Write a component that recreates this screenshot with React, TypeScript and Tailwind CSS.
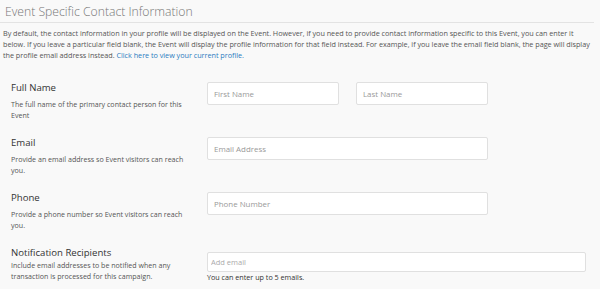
const rows = [
  {
    label: 'Full Name',
    desc: 'The full name of the primary contact person for this Event',
    fields: ['First Name', 'Last Name'],
  },
  {
    label: 'Email',
    desc: 'Provide an email address so Event visitors can reach you.',
    fields: ['Email Address'],
  },
  {
    label: 'Phone',
    desc: 'Provide a phone number so Event visitors can reach you.',
    fields: ['Phone Number'],
  },
]

export default function App() {
  return (
    <div className="w-[600px] h-[289px] overflow-hidden bg-[#f9f9f9] font-['Open_Sans',sans-serif]">
      <div className="pr-[6px] pt-[4px]">
        <h2 className="pl-[5px] pb-[2px] text-[12.2px] leading-[16px] font-light text-[#777] border-b border-[#e3e3e3]">
          Event Specific Contact Information
        </h2>
        <p className="pl-[3px] mt-[5px] text-[7.25px] leading-[11px] tracking-[-0.03px] text-[#555]">
          By default, the contact information in your profile will be displayed on the Event. However, if you need to
          provide contact information specific to this Event, you can enter it below. If you leave a particular field
          blank, the Event will display the profile information for that field instead. For example, if you leave the
          email field blank, the page will display the profile email address instead.{' '}
          <a href="#" className="text-[#2b7bbf]">Click here to view your current profile.</a>
        </p>
      </div>

      <div className="mt-[20px] pl-[11px] flex flex-col">
        {rows.map((r) => (
          <div key={r.label} className="flex h-[55px]">
            <div className="w-[196px] shrink-0">
              <div className="text-[9.6px] leading-[14px] text-[#333]">{r.label}</div>
              <div className="mt-[4px] w-[182px] text-[7.1px] leading-[11px] text-[#555]">{r.desc}</div>
            </div>
            <div className="mt-[1px] flex gap-[17px]">
              {r.fields.map((f) => (
                <input
                  key={f}
                  placeholder={f}
                  className={`${r.fields.length > 1 ? 'w-[132px]' : 'w-[281px]'} h-[23px] px-[6px] bg-white border border-[#e0e0e0] rounded-[2px] text-[7.9px] placeholder:text-[#999] outline-none`}
                />
              ))}
            </div>
          </div>
        ))}

        <div className="flex">
          <div className="w-[196px] shrink-0">
            <div className="text-[9.6px] leading-[14px] text-[#333]">Notification Recipients</div>
            <div className="w-[182px] text-[7.1px] leading-[11px] text-[#555]">
              Include email addresses to be notified when any transaction is processed for this campaign.
            </div>
          </div>
          <div className="mt-[1px]">
            <input
              placeholder="Add email"
              className="w-[379px] h-[20px] px-[3px] bg-white border border-[#e0e0e0] rounded-[2px] text-[7.5px] placeholder:text-[#aaa] outline-none"
            />
            <div className="text-[7.2px] leading-[11px] text-[#333]">You can enter up to 5 emails.</div>
          </div>
        </div>
      </div>
    </div>
  )
}
